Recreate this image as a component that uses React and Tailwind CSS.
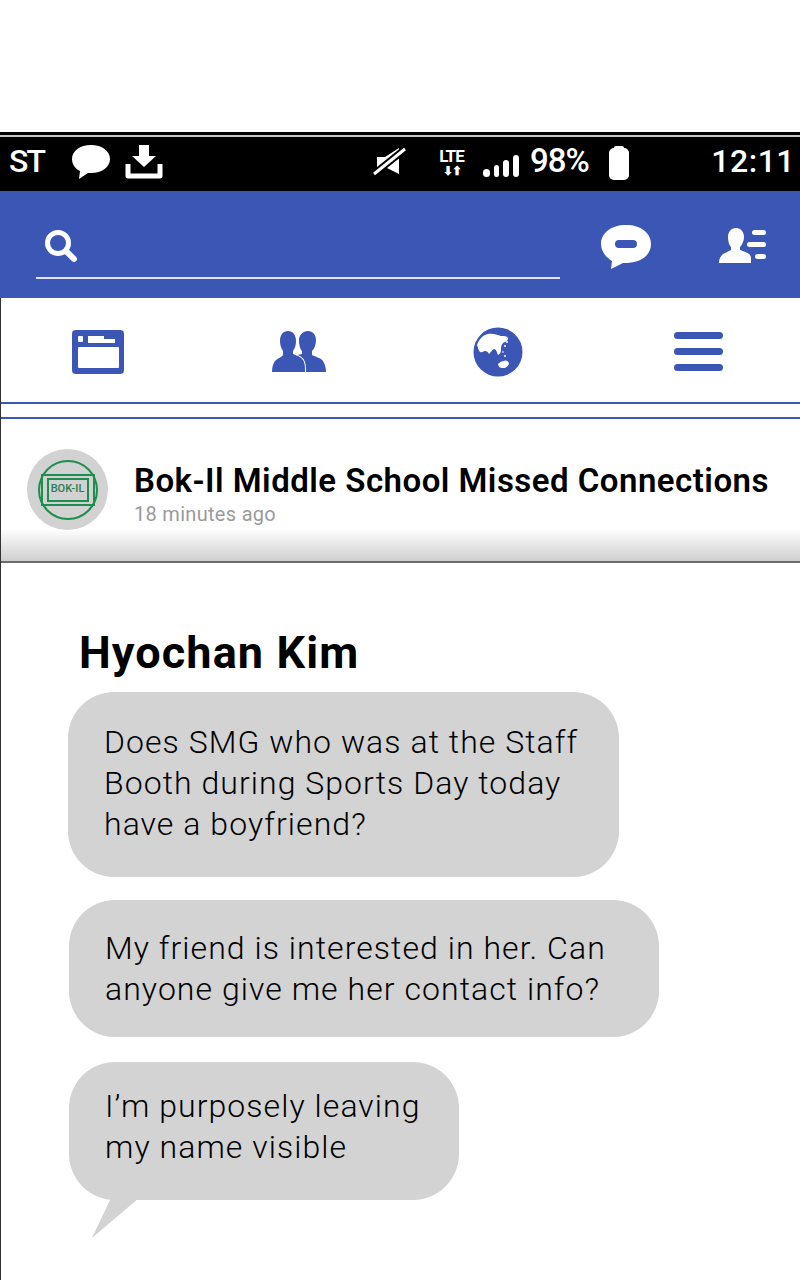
const BLUE = "#3b56b5";

const StatusBar = () => (
  <div className="h-[59px] mt-[132px] pt-[3px] bg-black text-white font-['Roboto',sans-serif]">
    <div className="h-[2px] bg-[#c4c4c4]" />
    <div className="h-[49px] flex items-center">
      <span className="ml-[9px] w-[36px] text-[32px] leading-none font-medium tracking-[-2px] mt-[-2px]">ST</span>
      {/* chat bubble */}
      <svg className="ml-[26px] mt-[1px] shrink-0" width="40" height="36" viewBox="0 0 40 36">
        <path d="M20 1C9 1 1 7 1 15c0 6 4 10 8 12l-1 8 9-6c1 0 2 0 3 0 11 0 19-6 19-14S31 1 20 1z" fill="#fff" />
      </svg>
      {/* download */}
      <svg className="ml-[14px] shrink-0" width="38" height="36" viewBox="0 0 38 36">
        <path d="M14 1h10v11h7L19 23 7 12h7z" fill="#fff" />
        <path d="M3 20v12h32V20" fill="none" stroke="#fff" strokeWidth="5" strokeLinejoin="round" />
      </svg>
      {/* muted speaker */}
      <svg className="ml-[210px] shrink-0" width="34" height="30" viewBox="0 0 34 30">
        <path d="M4 10h8l14-9v26l-14-7H4z" fill="#fff" />
        <path d="M1 27 32 2" stroke="#000" strokeWidth="7" />
        <path d="M1 27 32 2" stroke="#fff" strokeWidth="3" />
      </svg>
      <div className="ml-[29px] flex flex-col items-center w-[31px] mt-[1px]">
        <span className="text-[17px] leading-[17px] font-bold tracking-[-1px]">LTE</span>
        <span className="text-[12px] leading-[12px] font-bold tracking-[-1px]">⬇⬆</span>
      </div>
      <div className="ml-[16px] flex items-end gap-[4px] h-[22px] mt-[8px]">
        <span className="w-[7px] h-[8px] bg-white rounded-full" />
        <span className="w-[5px] h-[12px] bg-white rounded-full" />
        <span className="w-[6px] h-[17px] bg-white rounded-full" />
        <span className="w-[6px] h-[22px] bg-white rounded-full" />
      </div>
      <span className="ml-[11px] w-[66px] text-[33px] leading-none font-medium tracking-[-1px] mt-[-3px]">98%</span>
      <div className="ml-[13px] w-[20px] mt-[3px] flex flex-col items-center">
        <span className="w-[10px] h-[2px] bg-white rounded-t-[2px]" />
        <span className="w-[20px] h-[32px] bg-white rounded-[5px]" />
      </div>
      <span className="ml-auto mr-[5px] text-[32px] leading-none font-medium tracking-[0.5px] mt-[-2px]">12:11</span>
    </div>
  </div>
);

const SearchBar = () => (
  <div className="h-[107px] bg-[#3b56b5] flex items-start">
    <div className="ml-[36px] mt-[34px] w-[524px] h-[54px] border-b-2 border-[#dfe4f3] pl-[8px] pt-[4px]">
      <svg width="34" height="34" viewBox="0 0 34 34" fill="none" stroke="#fff">
        <circle cx="14" cy="14" r="10.5" strokeWidth="5" />
        <path d="M22 22l8 8" strokeWidth="6" strokeLinecap="round" />
      </svg>
    </div>
    {/* message icon */}
    <svg className="ml-[40px] mt-[33px]" width="52" height="46" viewBox="0 0 52 46">
      <path d="M26 1C11 1 1 9 1 20c0 8 6 14 11 17l-1 8 12-6c1 0 2 0 3 0 15 0 25-8 25-19S41 1 26 1z" fill="#fff" />
      <rect x="15" y="16" width="22" height="8" rx="4" fill={BLUE} />
    </svg>
    {/* friend list icon */}
    <svg className="ml-[67px] mt-[37px]" width="48" height="36" viewBox="0 0 48 36">
      <path d="M17 0c5 0 8 4 8 9 0 4-2 8-4 10v3c5 2 11 3 11 8v5H0c0-5 2-8 6-10l6-3v-3C10 17 9 13 9 9c0-5 3-9 8-9z" fill="#fff" />
      <rect x="33" y="2" width="14" height="5" rx="2.5" fill="#fff" />
      <rect x="28" y="14" width="19" height="5" rx="2.5" fill="#fff" />
      <rect x="36" y="26" width="11" height="5" rx="2.5" fill="#fff" />
    </svg>
  </div>
);

const NavIcons = () => (
  <div className="h-[104px] flex">
    <div className="w-[200px] flex justify-center pt-[32px]">
      <svg className="mr-[6px]" width="52" height="44" viewBox="0 0 52 44">
        <rect x="0" y="0" width="52" height="44" rx="4" fill={BLUE} />
        <rect x="6" y="17" width="41" height="21" rx="1" fill="#fff" />
        <rect x="6" y="6" width="5" height="6" rx="1" fill="#fff" />
        <path d="M16 6h16v3h11v4H16z" fill="#fff" />
      </svg>
    </div>
    <div className="w-[200px] flex justify-center pt-[33px]">
      <svg className="mr-[3px]" width="56" height="41" viewBox="0 0 56 41">
        {/* back person, then front person with a white edge */}
        <path d="M37 0c5 0 8 4 8 9 0 5-2 9-4 11v4c4 2 9 3 11 6 2 3 3 7 3 11H26V24l5-1v-3c-2-2-3-6-3-11 0-5 4-9 9-9z" fill={BLUE} />
        <path d="M17 0c5 0 8 4 8 10 0 4-1 7-3 10v3c5 2 9 3 11 8 1 3 1 6 1 10H1c0-5 1-8 3-11 3-3 7-4 8-6v-4c-2-3-3-6-3-10 0-6 3-10 8-10z" fill={BLUE} stroke="#fff" strokeWidth="2" paintOrder="stroke" />
      </svg>
    </div>
    <div className="w-[200px] flex justify-center pt-[29px]">
      <svg className="mr-[4px]" width="50" height="50" viewBox="0 0 50 50">
        <circle cx="25" cy="25" r="24.5" fill={BLUE} />
        <path d="M4 18C6 12 10 8 15 7c5-1 9 1 13 2 3 0 6 0 7 2 0 3-3 4-5 5-2 2-2 4-2 7 0 2-1 4-3 5-1-3-2-6-4-6-2 1-3 3-5 5-1-2-2-3-4-3s-3 2-5 1c-2-2-2-5-3-7z" fill="#fff" />
        <path d="M25 37c2-2 4-3 6-3 2-1 4 0 5 2 0 2-2 4-4 5-2 0-5 0-6-1z" fill="#fff" />
        <circle cx="32" cy="19" r="1" fill="#fff" />
        <circle cx="34" cy="15" r="1" fill="#fff" />
        <circle cx="32" cy="29" r="1" fill="#fff" />
        <circle cx="30" cy="25" r="0.8" fill="#fff" />
      </svg>
    </div>
    <div className="w-[200px] flex flex-col items-center pt-[34px] gap-[9px]">
      <span className="block w-[49px] h-[7px] rounded-full bg-[#3b56b5] mr-[4px]" />
      <span className="block w-[49px] h-[7px] rounded-full bg-[#3b56b5] mr-[4px]" />
      <span className="block w-[49px] h-[7px] rounded-full bg-[#3b56b5] mr-[4px]" />
    </div>
  </div>
);

const PostHeader = () => (
  <div className="h-[144px] border-b-2 border-[#6b6b6b] bg-[linear-gradient(to_bottom,#fff_0,#fff_110px,#cfcfcf_142px)] flex items-start font-['Roboto',sans-serif]">
    <div className="ml-[26px] mt-[30px] w-[81px] h-[81px] rounded-full bg-[#d2d2d2] flex items-center justify-center">
      <div className="w-[60px] h-[60px] rounded-full border-2 border-[#1e8e4e] flex items-center justify-center">
        <div className="w-[54px] h-[32px] shrink-0 border-2 border-[#1e8e4e] flex items-center justify-center">
          <div className="w-[42px] h-[24px] shrink-0 border-2 border-[#1e8e4e] flex items-center justify-center text-[11px] font-medium text-[#2a7d52] whitespace-nowrap">BOK-IL</div>
        </div>
      </div>
    </div>
    <div className="ml-[26px] mt-[43px]">
      <div className="text-[33px] leading-[38px] font-semibold text-black tracking-[0.48px] whitespace-nowrap">Bok-Il Middle School Missed Connections</div>
      <div className="text-[20px] leading-[28px] text-[#9a9a9a] tracking-[0.3px]">18 minutes ago</div>
    </div>
  </div>
);

const Bubble = ({ className, lines }) => (
  <div className={"bg-[#d3d3d3] text-[32px] leading-[41px] font-light tracking-[1.05px] text-black " + className}>
    {lines.map(line => <div key={line} className="whitespace-nowrap">{line}</div>)}
  </div>
);

const Messages = () => (
  <div className="font-['Roboto',sans-serif] flex-1">
    <div className="ml-[78px] mt-[64px] text-[45px] leading-[52px] font-bold text-black tracking-[1.1px]">Hyochan Kim</div>
    <Bubble
      className="ml-[67px] mt-[13px] w-[551px] h-[185px] rounded-[46px] pl-[36px] pt-[30px]"
      lines={["Does SMG who was at the Staff", "Booth during Sports Day today", "have a boyfriend?"]}
    />
    <Bubble
      className="ml-[68px] mt-[23px] w-[590px] h-[137px] rounded-[46px] pl-[36px] pt-[28px]"
      lines={["My friend is interested in her. Can", "anyone give me her contact info?"]}
    />
    <div className="relative ml-[68px] mt-[25px] w-[390px]">
      <Bubble
        className="h-[138px] rounded-[46px] pl-[36px] pt-[24px]"
        lines={["I’m purposely leaving", "my name visible"]}
      />
      <svg className="absolute left-[23px] top-[136px]" width="48" height="42" viewBox="0 0 48 42">
        <path d="M0 40 L19 0 L47 0 Z" fill="#d3d3d3" />
      </svg>
    </div>
  </div>
);

export default function App() {
  return (
    <div className="w-[800px] h-[1280px] bg-white overflow-hidden flex flex-col">
      <StatusBar />
      <SearchBar />
      <div className="flex-1 flex flex-col border-l border-[#333]">
        <NavIcons />
        <div className="h-[17px] border-y-2 border-[#3b56b5]" />
        <PostHeader />
        <Messages />
      </div>
    </div>
  );
}
